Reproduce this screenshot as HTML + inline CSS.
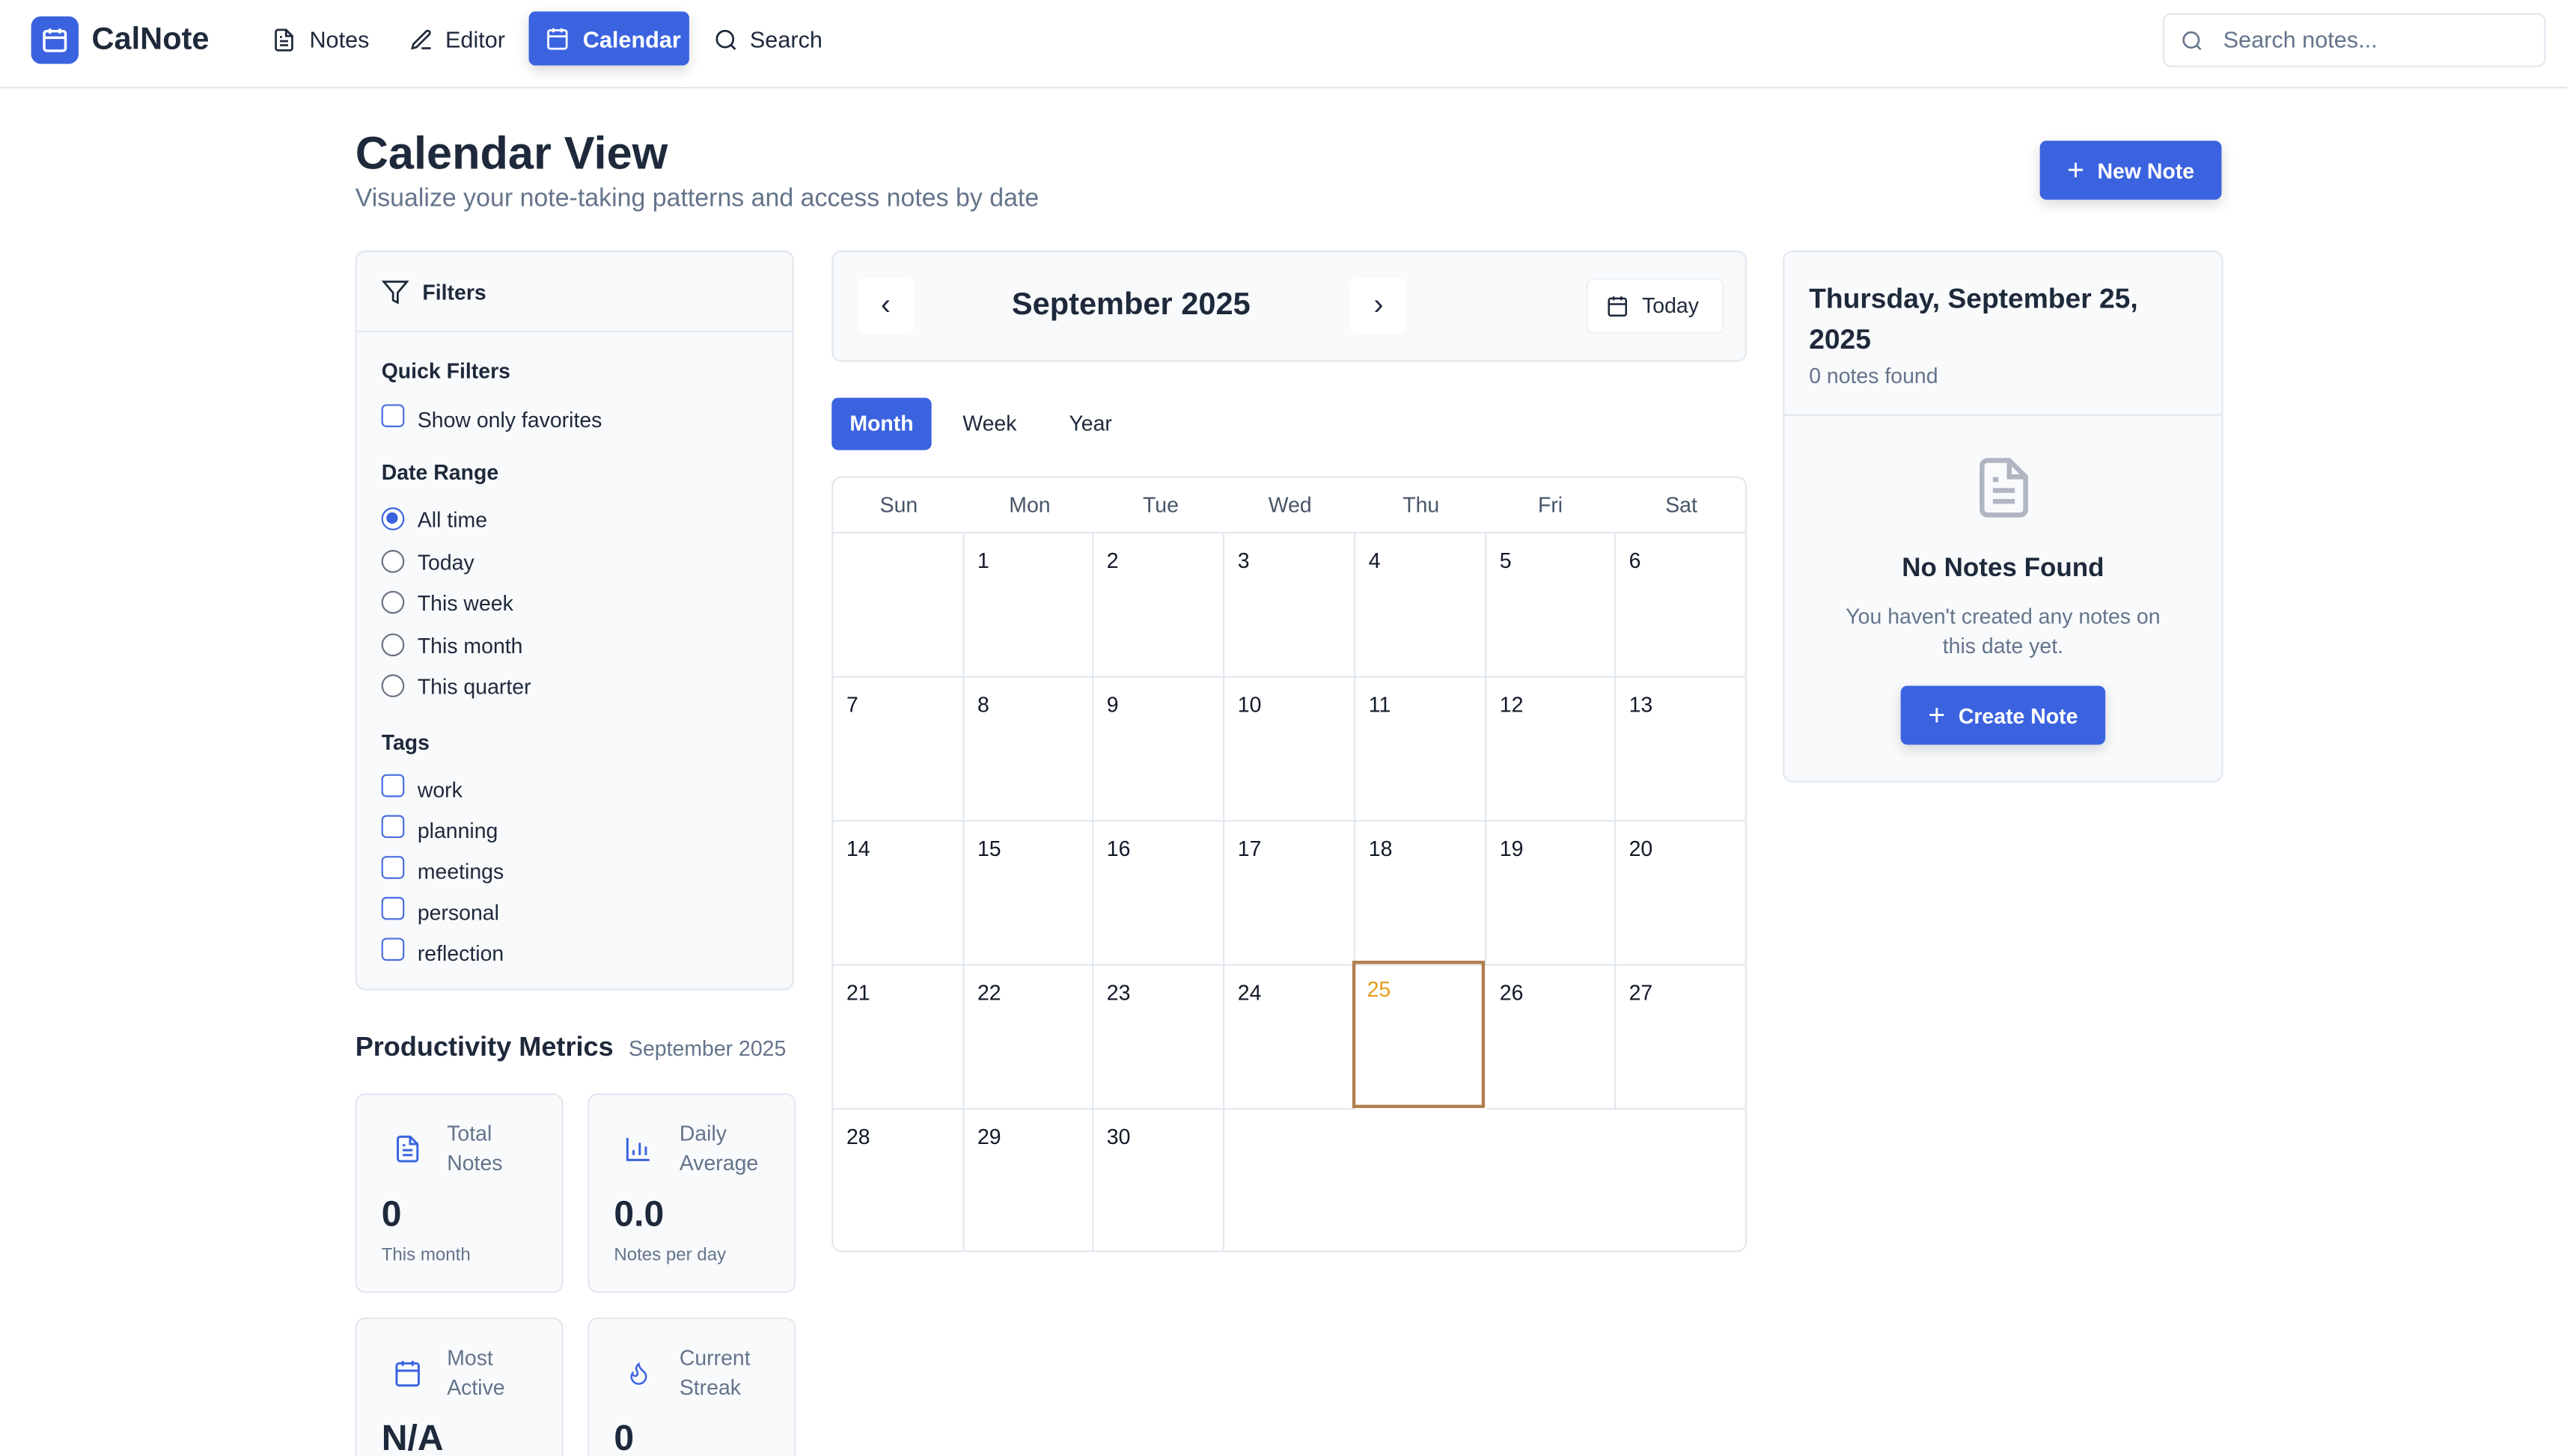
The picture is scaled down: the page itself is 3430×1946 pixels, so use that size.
<!DOCTYPE html>
<html><head><meta charset="utf-8"><style>
*{box-sizing:border-box;margin:0;padding:0}
html,body{width:3430px;height:1946px;overflow:hidden;background:#fff}
#r{width:1568px;height:890px;transform:scale(2.1875);transform-origin:0 0;position:relative;font-family:"Liberation Sans",sans-serif;color:#1e293b}
.a{position:absolute}
svg{display:block}
.card{position:absolute;background:#f8fafc;border:1px solid #e2e8f0;border-radius:6px}
.btn{position:absolute;background:#3b63e0;color:#fff;border-radius:4px;font-weight:bold;font-size:13px;display:flex;align-items:center;justify-content:center;gap:8px;box-shadow:0 3px 8px rgba(0,0,0,.15)}
.cb{position:absolute;left:15px;width:14px;height:14px;border:1.5px solid #4a6ee0;border-radius:3px;background:#fff}
.rd{position:absolute;left:15px;width:14px;height:14px;border:1.5px solid #6b7280;border-radius:50%;background:#fff}
.lbl{position:absolute;left:37px;font-size:13px;color:#1e293b}
.h{position:absolute;left:15px;font-size:13px;font-weight:bold;color:#1e293b}
.cell{position:absolute;border-right:1px solid #e2e8f0;border-bottom:1px solid #e2e8f0;font-size:13px;padding:9px 8px;color:#111827}
.dn{position:absolute;top:0;height:34px;line-height:33px;text-align:center;font-size:13px;color:#475569}
.m{position:absolute;font-size:13px;color:#64748b;line-height:18px}
</style></head><body><div id="r">
<!-- header -->
<div class="a" style="left:0;top:0;width:1568px;height:54px;border-bottom:1px solid #e2e8f0"></div>
<div class="a" style="left:19px;top:10px;width:29px;height:29px;background:#3b63e0;border-radius:6px"><svg width="29" height="29" viewBox="0 0 29 29" fill="none" stroke="#fff" stroke-width="1.6"><rect x="8" y="9" width="13" height="12" rx="1.5"/><path d="M8 13h13M11.5 7.5v3M17.5 7.5v3"/></svg></div>
<div class="a" style="left:56px;top:14px;font-size:19px;font-weight:bold">CalNote</div>
<svg class="a" style="left:166px;top:17px" width="15" height="15" viewBox="0 0 24 24" fill="none" stroke="#1e293b" stroke-width="2"><path d="M14 2H6a2 2 0 0 0-2 2v16a2 2 0 0 0 2 2h12a2 2 0 0 0 2-2V8z"/><path d="M14 2v6h6M16 13H8M16 17H8M10 9H8"/></svg>
<div class="a" style="left:189px;top:16px;font-size:14px">Notes</div>
<svg class="a" style="left:250px;top:17px" width="15" height="15" viewBox="0 0 24 24" fill="none" stroke="#1e293b" stroke-width="2"><path d="M12 20h9M16.5 3.5a2.1 2.1 0 0 1 3 3L7 19l-4 1 1-4z"/></svg>
<div class="a" style="left:272px;top:16px;font-size:14px">Editor</div>
<div class="a" style="left:323px;top:7px;width:98px;height:33px;background:#3b63e0;border-radius:4px;box-shadow:0 3px 8px rgba(0,0,0,.15)"></div>
<svg class="a" style="left:333px;top:16px" width="15" height="15" viewBox="0 0 24 24" fill="none" stroke="#fff" stroke-width="2"><rect x="3" y="4" width="18" height="18" rx="2"/><path d="M16 2v4M8 2v4M3 10h18"/></svg>
<div class="a" style="left:356px;top:16px;font-size:14px;color:#fff;font-weight:bold">Calendar</div>
<svg class="a" style="left:436px;top:17px" width="15" height="15" viewBox="0 0 24 24" fill="none" stroke="#1e293b" stroke-width="2"><circle cx="11" cy="11" r="8"/><path d="M21 21l-4.3-4.3"/></svg>
<div class="a" style="left:458px;top:16px;font-size:14px">Search</div>
<div class="a" style="left:1321px;top:8px;width:234px;height:33px;border:1px solid #e2e8f0;border-radius:5px;background:#fff"></div>
<svg class="a" style="left:1332px;top:18px" width="14" height="14" viewBox="0 0 24 24" fill="none" stroke="#64748b" stroke-width="2"><circle cx="11" cy="11" r="8"/><path d="M21 21l-4.3-4.3"/></svg>
<div class="a" style="left:1358px;top:16px;font-size:14px;color:#64748b">Search notes...</div>
<!-- title -->
<div class="a" style="left:217px;top:78px;font-size:28px;font-weight:bold">Calendar View</div>
<div class="a" style="left:217px;top:113px;font-size:15.5px;color:#64748b">Visualize your note-taking patterns and access notes by date</div>
<div class="btn" style="left:1246px;top:86px;width:111px;height:36px"><span style="font-size:18px;font-weight:normal">+</span>New Note</div>
<!-- filters -->
<div class="card" style="left:217px;top:153px;width:268px;height:452px">
<div class="a" style="left:0;top:48px;width:266px;border-top:1px solid #e2e8f0"></div>
<svg class="a" style="left:15px;top:16px" width="17" height="17" viewBox="0 0 24 24" fill="none" stroke="#1e293b" stroke-width="1.8"><path d="M22 3H2l8 9.5V19l4 2v-8.5z"/></svg>
<div class="a" style="left:40px;top:17px;font-size:13px;font-weight:bold">Filters</div>
<div class="h" style="top:65px">Quick Filters</div>
<div class="cb" style="top:93px"></div><div class="lbl" style="top:95px">Show only favorites</div>
<div class="h" style="top:127px">Date Range</div>
<div class="rd" style="top:156px;border-color:#3b63e0"><div style="margin:2px;width:7px;height:7px;border-radius:50%;background:#3b63e0"></div></div><div class="lbl" style="top:156px">All time</div>
<div class="rd" style="top:182px"></div><div class="lbl" style="top:182px">Today</div>
<div class="rd" style="top:207px"></div><div class="lbl" style="top:207px">This week</div>
<div class="rd" style="top:233px"></div><div class="lbl" style="top:233px">This month</div>
<div class="rd" style="top:258px"></div><div class="lbl" style="top:258px">This quarter</div>
<div class="h" style="top:292px">Tags</div>
<div class="cb" style="top:319px"></div><div class="lbl" style="top:321px">work</div>
<div class="cb" style="top:344px"></div><div class="lbl" style="top:346px">planning</div>
<div class="cb" style="top:369px"></div><div class="lbl" style="top:371px">meetings</div>
<div class="cb" style="top:394px"></div><div class="lbl" style="top:396px">personal</div>
<div class="cb" style="top:419px"></div><div class="lbl" style="top:421px">reflection</div>
</div>
<!-- metrics -->
<div class="a" style="left:217px;top:631px;font-size:16.5px;font-weight:bold">Productivity Metrics</div>
<div class="a" style="left:384px;top:633px;font-size:13px;color:#64748b">September 2025</div>
<div class="card" style="left:217px;top:668px;width:127px;height:122px">
<svg class="a" style="left:22px;top:24px" width="18" height="18" viewBox="0 0 24 24" fill="none" stroke="#3b63e0" stroke-width="1.8"><path d="M14 2H6a2 2 0 0 0-2 2v16a2 2 0 0 0 2 2h12a2 2 0 0 0 2-2V8z"/><path d="M14 2v6h6M16 13H8M16 17H8M10 9H8"/></svg>
<div class="m" style="left:55px;top:15px">Total<br>Notes</div>
<div class="a" style="left:15px;top:60px;font-size:22px;font-weight:bold">0</div>
<div class="a" style="left:15px;top:92px;font-size:11px;color:#64748b">This month</div></div>
<div class="card" style="left:359px;top:668px;width:127px;height:122px">
<svg class="a" style="left:21px;top:24px" width="18" height="18" viewBox="0 0 24 24" fill="none" stroke="#3b63e0" stroke-width="1.8"><path d="M3 3v18h18M8 17v-4M13 17V7M18 17v-7"/></svg>
<div class="m" style="left:55px;top:15px">Daily<br>Average</div>
<div class="a" style="left:15px;top:60px;font-size:22px;font-weight:bold">0.0</div>
<div class="a" style="left:15px;top:92px;font-size:11px;color:#64748b">Notes per day</div></div>
<div class="card" style="left:217px;top:805px;width:127px;height:122px">
<svg class="a" style="left:22px;top:24px" width="18" height="18" viewBox="0 0 24 24" fill="none" stroke="#3b63e0" stroke-width="1.8"><rect x="3" y="4" width="18" height="18" rx="2"/><path d="M16 2v4M8 2v4M3 10h18"/></svg>
<div class="m" style="left:55px;top:15px">Most<br>Active</div>
<div class="a" style="left:15px;top:60px;font-size:22px;font-weight:bold">N/A</div></div>
<div class="card" style="left:359px;top:805px;width:127px;height:122px">
<svg class="a" style="left:21px;top:24px" width="18" height="18" viewBox="0 0 24 24" fill="none" stroke="#3b63e0" stroke-width="1.8"><path d="M8.5 14.5A2.5 2.5 0 0 0 11 12c0-1.4-.5-2-1-3-1-2.1-.2-4.1 2-6 .5 2.5 2 4.9 4 6.5 2 1.6 3 3.5 3 5.5a7 7 0 1 1-14 0c0-1.2.4-2.3 1-3.1.1 1.6 1.2 2.6 2.5 2.6z" transform="translate(2,2) scale(.85)"/></svg>
<div class="m" style="left:55px;top:15px">Current<br>Streak</div>
<div class="a" style="left:15px;top:60px;font-size:22px;font-weight:bold">0</div></div>
<!-- calendar header -->
<div class="card" style="left:508px;top:153px;width:559px;height:68px">
<div class="a" style="left:15px;top:16px;width:34px;height:34px;border-radius:4px;background:#fff;font-size:18px;text-align:center;line-height:32px">‹</div>
<div class="a" style="left:109px;top:22px;font-size:19px;font-weight:bold">September 2025</div>
<div class="a" style="left:316px;top:16px;width:34px;height:34px;border-radius:4px;background:#fff;font-size:18px;text-align:center;line-height:32px">›</div>
<div class="a" style="left:460px;top:16px;width:84px;height:34px;border-radius:4px;background:#fff;border:1px solid #eef1f5"></div>
<svg class="a" style="left:472px;top:26px" width="14" height="14" viewBox="0 0 24 24" fill="none" stroke="#1e293b" stroke-width="2"><rect x="3" y="4" width="18" height="18" rx="2"/><path d="M16 2v4M8 2v4M3 10h18"/></svg>
<div class="a" style="left:494px;top:25px;font-size:13px">Today</div>
</div>
<div class="a" style="left:508px;top:243px;width:61px;height:32px;background:#3b63e0;border-radius:4px;color:#fff;font-weight:bold;font-size:13px;text-align:center;line-height:32px">Month</div>
<div class="a" style="left:588px;top:251px;font-size:13px">Week</div>
<div class="a" style="left:653px;top:251px;font-size:13px">Year</div>
<!-- grid -->
<div class="a" style="left:508px;top:291px;width:559px;height:474px;border:1px solid #e2e8f0;border-radius:6px;overflow:hidden" id="g">
<div class="dn" style="left:0;width:80px">Sun</div><div class="dn" style="left:80px;width:80px">Mon</div><div class="dn" style="left:160px;width:80px">Tue</div><div class="dn" style="left:239px;width:80px">Wed</div><div class="dn" style="left:319px;width:80px">Thu</div><div class="dn" style="left:398px;width:80px">Fri</div><div class="dn" style="left:478px;width:80px">Sat</div>
<div class="a" style="left:0;top:33px;width:559px;border-top:1px solid #e2e8f0"></div>
</div>
<script>
var g=document.getElementById('g'),h='';
for(var i=0;i<31;i++){var d=i;var r=Math.floor(i/7),c=i%7;var x=Math.round(c*79.7),w=Math.round((c+1)*79.7)-x;
var t=34+r*88;
if(i==0){h+='<div class="cell" style="left:'+x+'px;top:'+t+'px;width:'+w+'px;height:88px;"></div>';continue;}
var s='left:'+x+'px;top:'+t+'px;width:'+w+'px;height:88px;';
if(d==25)s='left:'+(x-2)+'px;top:'+(t-3)+'px;width:'+(w+1)+'px;height:90px;border:2px solid #b07f4e;color:#e59a1a;z-index:2;padding:8px 7px;';
h+='<div class="cell" style="'+s+'">'+d+'</div>';}
g.insertAdjacentHTML('beforeend',h);
</script>
<!-- right panel -->
<div class="card" style="left:1089px;top:153px;width:269px;height:325px">
<div class="a" style="left:15px;top:16px;font-size:17px;font-weight:bold;line-height:25px">Thursday, September 25,<br>2025</div>
<div class="a" style="left:15px;top:68px;font-size:13px;color:#64748b">0 notes found</div>
<div class="a" style="left:0;top:99px;width:267px;border-top:1px solid #e2e8f0"></div>
<svg class="a" style="left:114px;top:123px" width="40" height="42" viewBox="0 0 24 24" fill="none" stroke="#b0b6c2" stroke-width="1.8"><path d="M14 2H6a2 2 0 0 0-2 2v16a2 2 0 0 0 2 2h12a2 2 0 0 0 2-2V8z"/><path d="M14 2v6h6M16 13H8M16 17H8M10 9H8"/></svg>
<div class="a" style="left:0;width:267px;top:185px;text-align:center;font-size:16px;font-weight:bold">No Notes Found</div>
<div class="a" style="left:0;width:267px;top:214px;text-align:center;font-size:13px;color:#64748b;line-height:18px">You haven't created any notes on<br>this date yet.</div>
<div class="btn" style="left:71px;top:265px;width:125px;height:36px"><span style="font-size:18px;font-weight:normal">+</span>Create Note</div>
</div>
</div></body></html>
